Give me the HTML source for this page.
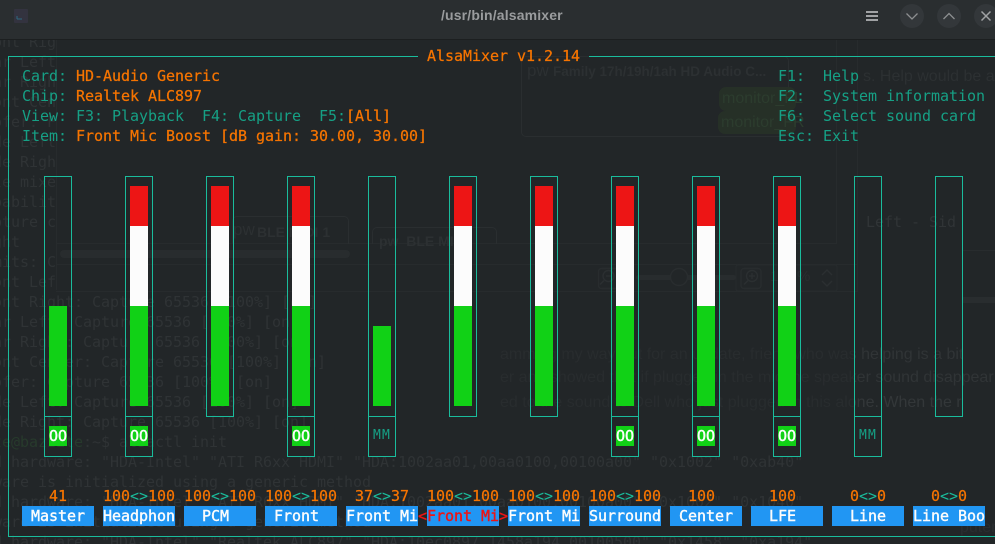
<!DOCTYPE html>
<html><head><meta charset="utf-8"><title>alsamixer</title>
<style>
html,body{margin:0;padding:0;background:#222628;width:995px;height:544px;overflow:hidden}
#r{position:relative;width:995px;height:544px;overflow:hidden;background:#222628}
.a{position:absolute}
.t{position:absolute;white-space:pre;font:15px/20px "DejaVu Sans Mono","Liberation Mono",monospace;letter-spacing:-.03px}
.o{color:#f67400;-webkit-text-stroke:.25px #f67400}.g{color:#16a085}.w{color:#fcfcfc;-webkit-text-stroke:.4px #fcfcfc}.rd{color:#ed1515;-webkit-text-stroke:.4px #ed1515}
.c{color:#1abc9c;-webkit-text-stroke:0}
.bg{color:#2f3335;left:-7px}
.s{position:absolute;white-space:pre;font:15px/20px "Liberation Sans",sans-serif;color:#2a2e30}
.f{position:absolute;width:26px;border:1px solid #1abc9c;box-sizing:content-box;top:176px;height:239px}
.f2{height:279px}
.f2:after{content:"";position:absolute;left:0;right:0;top:239px;height:1px;background:#1abc9c}
.l{position:absolute;background:#1abc9c}
.b{position:absolute;width:18px}
.lab{position:absolute;top:506px;height:20px;width:72px;background:#2196f3}
.btn{position:absolute;top:4px;width:24px;height:24px;border-radius:50%;background:#33373a}
</style></head><body><div id="r">

<!-- faint background windows -->
<div class="a" style="left:56px;top:40px;width:1px;height:250px;background:#272b2d"></div>
<div class="a" style="left:56px;top:243px;width:780px;height:1px;background:#272b2d"></div>
<div class="a" style="left:56px;top:264px;width:801px;height:1px;background:#272b2d"></div>
<div class="a" style="left:56px;top:291px;width:801px;height:1px;background:#272b2d"></div>
<div class="a" style="left:836px;top:40px;width:1px;height:204px;background:#272b2d"></div>
<div class="a" style="left:857px;top:40px;width:1px;height:252px;background:#272b2d"></div>
<div class="a" style="left:60px;top:250px;width:290px;height:8px;border-radius:4px;background:#282c2e"></div>
<div class="a" style="left:521px;top:56px;width:268px;height:81px;border:1px solid #2a2e30;border-radius:5px;box-sizing:border-box"></div>
<div class="a" style="left:719px;top:87px;width:77px;height:24px;background:#263027;border-radius:7px"></div>
<div class="a" style="left:718px;top:111px;width:78px;height:23px;background:#263027;border-radius:7px"></div>
<div class="a" style="left:232px;top:216px;width:117px;height:28px;border:1px solid #2a2e30;border-bottom:0;border-radius:5px 5px 0 0;box-sizing:border-box"></div>
<div class="a" style="left:372px;top:227px;width:125px;height:17px;border:1px solid #2a2e30;border-bottom:0;border-radius:5px 5px 0 0;box-sizing:border-box"></div>
<div class="a" style="left:636px;top:275px;width:100px;height:5px;background:#282c2e;border-radius:3px"></div>
<svg class="a" style="left:596px;top:264px" width="250" height="28" fill="none" stroke="#2b2f31" stroke-width="1.400">
<rect x="2.500" y="4.500" width="20" height="20" rx="3" stroke="#282c2e"/>
<circle cx="12.500" cy="12" r="5.500"/><path d="M8 16.500l-4 4M10 12h5"/>
<circle cx="83" cy="13" r="8.500" fill="#222628" stroke="#292d2f"/>
<rect x="145" y="4.500" width="20" height="20" rx="3" stroke="#282c2e"/>
<circle cx="156" cy="12" r="5.500"/><path d="M152 16.500l-4 4M153 12h6M156 9v6"/>
<path d="M226 11l5-5 5 5M226 17l5 5 5-5"/>
<rect x="140" y="1" width="101" height="26" rx="2" stroke="#272b2d" stroke-width="1"/>
</svg>
<div class="s" style="left:770px;top:267px;color:#2a2e30">1</div>
<div class="s" style="left:797px;top:267px;color:#2a2e30">%</div>
<div class="a" style="left:963px;top:297px;width:32px;height:6px;background:#292d2f"></div>
<div class="a" style="left:963px;top:250px;width:32px;height:1px;background:#282c2e"></div>
<div class="s" style="left:527px;top:61px;font-size:17px;color:#2c3032">pw</div>
<div class="s" style="left:553px;top:62px;font-weight:bold;font-size:13.500px;color:#2c3032">Family 17h/19h/1ah HD Audio C...</div>
<div class="s" style="left:722px;top:89px;font-size:16px;color:#2c3c2e">monitor_FL</div>
<div class="s" style="left:721px;top:113px;font-size:16px;color:#2c3c2e">monitor_FR</div>
<div class="s" style="left:233px;top:220px;font-size:17px;color:#2c3032">pw</div>
<div class="s" style="left:257px;top:222px;font-weight:bold;font-size:14px;color:#2c3032">BLE MIDI 1</div>
<div class="s" style="left:379px;top:231px;font-weight:bold;font-size:14px;color:#2c3032">pw  BLE MIDI</div>
<div class="s" style="left:863px;top:67px;font-size:16px;color:#2c3032">s. Help would be ap</div>
<div class="s" style="left:500px;top:345px;font-size:16px;background:linear-gradient(90deg,#282c2e 0 355px,#303436 355px);-webkit-background-clip:text;background-clip:text;color:transparent">amming my way out for an update, friend who was helping is a bit</div>
<div class="s" style="left:500px;top:368px;font-size:16px;background:linear-gradient(90deg,#282c2e 0 355px,#303436 355px);-webkit-background-clip:text;background-clip:text;color:transparent">er and showed that if plugged in the mic the speaker sound disappear a</div>
<div class="s" style="left:500px;top:393px;font-size:16px;background:linear-gradient(90deg,#282c2e 0 355px,#333739 355px);-webkit-background-clip:text;background-clip:text;color:transparent">ed to the sound to Dell who just plugged in this alone. When the r</div>
<div class="s" style="left:960px;top:518px;font-size:16px">puter</div>
<div class="t" style="left:866px;top:212px;color:#303436">Left - Sid</div>

<!-- faint terminal scrollback -->
<div class="t bg" style="top:32px">ont Rig</div>
<div class="t bg" style="top:52px">ar Left</div>
<div class="t bg" style="top:72px">ar Righ</div>
<div class="t bg" style="top:92px">ont Cen</div>
<div class="t bg" style="top:112px">ofer: F</div>
<div class="t bg" style="top:132px">de Left</div>
<div class="t bg" style="top:152px">de Righ</div>
<div class="t bg" style="top:172px">le mixe</div>
<div class="t bg" style="top:192px">pabilit</div>
<div class="t bg" style="top:212px">pture c</div>
<div class="t bg" style="top:232px">ght</div>
<div class="t bg" style="top:252px">mits: C</div>
<div class="t bg" style="top:272px">ont Lef</div>
<div class="t bg" style="top:292px">ont Right: Capture 65536 [100%] [on]</div>
<div class="t bg" style="top:312px">ar Left: Capture 65536 [100%] [on]</div>
<div class="t bg" style="top:332px">ar Right: Capture 65536 [100%] [on]</div>
<div class="t bg" style="top:352px">ont Center: Capture 65536 [100%] [on]</div>
<div class="t bg" style="top:372px">ofer: Capture 65536 [100%] [on]</div>
<div class="t bg" style="top:392px">de Left: Capture 65536 [100%] [on]</div>
<div class="t bg" style="top:412px">de Right: Capture 65536 [100%] [on]</div>
<div class="t bg" style="top:432px"><span style="color:#273a2c">te@bazzite</span>:~$ alsactl init</div>
<div class="t bg" style="top:452px">d hardware: "HDA-Intel" "ATI R6xx HDMI" "HDA:1002aa01,00aa0100,00100a00" "0x1002" "0xab40"</div>
<div class="t bg" style="top:472px">ware is initialized using a generic method</div>
<div class="t bg" style="top:492px">d hardware: "HDA-Intel" "ATI R6xx HDMI" "HDA:1002aa01,00aa0100,00100a00" "0x1002" "0x1040"</div>
<div class="t bg" style="top:512px">ware is initialized using a generic method</div>
<div class="t bg" style="top:532px">d hardware: "HDA-Intel" "Realtek ALC897" "HDA:10ec0897,1458a194,00100500" "0x1458" "0xa194"</div>

<!-- title bar -->
<div class="a" style="left:0;top:0;width:995px;height:39px;background:#2a2e30;border-bottom:1px solid #1c1f20"></div>
<svg class="a" style="left:14px;top:9px" width="14" height="14" viewBox="0 0 14 14"><rect width="14" height="14" rx="1" fill="#33333f"/><path d="M3 7v3M3 10h5" stroke="#2d6a80" fill="none"/></svg>
<div class="a" style="left:441px;top:4px;white-space:pre;font:bold 14px/22px 'Liberation Sans',sans-serif;color:#9a9c9e;letter-spacing:.15px">/usr/bin/alsamixer</div>
<svg class="a" style="left:866px;top:11px" width="12" height="10"><rect width="12" height="2" fill="#a0a2a4"/><rect y="4" width="12" height="2" fill="#a0a2a4"/><rect y="8" width="12" height="2" fill="#a0a2a4"/></svg>
<div class="btn" style="left:900px"><svg width="24" height="24"><path d="M6.500 9.500l5.500 5.500 5.500-5.500" stroke="#8d8f91" stroke-width="1.300" fill="none"/></svg></div>
<div class="btn" style="left:937px"><svg width="24" height="24"><path d="M6.500 15l5.500-5.500 5.500 5.500" stroke="#8d8f91" stroke-width="1.300" fill="none"/></svg></div>
<div class="btn" style="left:974px"><svg width="24" height="24"><path d="M7.500 7.500l9 9M16.500 7.500l-9 9" stroke="#a0a2a4" stroke-width="1.500" fill="none"/></svg></div>

<!-- outer border -->
<div class="l" style="left:8px;top:56px;width:410px;height:1px"></div>
<div class="l" style="left:589px;top:56px;width:406px;height:1px"></div>
<div class="l" style="left:8px;top:56px;width:1px;height:481px"></div>
<div class="l" style="left:8px;top:536px;width:987px;height:1px"></div>

<!-- header text -->
<div class="t o" style="left:427px;top:46px">AlsaMixer v1.2.14</div>
<div class="t" style="left:22px;top:66px"><span class="g">Card: </span><span class="o">HD-Audio Generic</span></div>
<div class="t" style="left:22px;top:86px"><span class="g">Chip: </span><span class="o">Realtek ALC897</span></div>
<div class="t" style="left:22px;top:106px"><span class="g">View: F3: Playback  F4: Capture  F5:</span><span class="o">[All]</span></div>
<div class="t" style="left:22px;top:126px"><span class="g">Item: </span><span class="o">Front Mic Boost [dB gain: 30.00, 30.00]</span></div>
<div class="t g" style="left:778px;top:66px">F1:  Help</div>
<div class="t g" style="left:778px;top:86px">F2:  System information</div>
<div class="t g" style="left:778px;top:106px">F6:  Select sound card</div>
<div class="t g" style="left:778px;top:126px">Esc: Exit</div>

<!-- frames -->
<div class="f f2" style="left:44px"></div>
<div class="f f2" style="left:125px"></div>
<div class="f" style="left:206px"></div>
<div class="f f2" style="left:287px"></div>
<div class="f f2" style="left:368px"></div>
<div class="f" style="left:449px"></div>
<div class="f" style="left:530px"></div>
<div class="f f2" style="left:611px"></div>
<div class="f f2" style="left:692px"></div>
<div class="f f2" style="left:773px"></div>
<div class="f f2" style="left:854px"></div>
<div class="f" style="left:935px"></div>

<!-- bars -->
<div class="b" style="left:49px;top:306px;height:100px;background:#11d116"></div>

<div class="b" style="left:130px;top:186px;height:40px;background:#ed1515"></div><div class="b" style="left:130px;top:226px;height:80px;background:#fcfcfc"></div><div class="b" style="left:130px;top:306px;height:100px;background:#11d116"></div>
<div class="b" style="left:211px;top:186px;height:40px;background:#ed1515"></div><div class="b" style="left:211px;top:226px;height:80px;background:#fcfcfc"></div><div class="b" style="left:211px;top:306px;height:100px;background:#11d116"></div>
<div class="b" style="left:292px;top:186px;height:40px;background:#ed1515"></div><div class="b" style="left:292px;top:226px;height:80px;background:#fcfcfc"></div><div class="b" style="left:292px;top:306px;height:100px;background:#11d116"></div>

<div class="b" style="left:373px;top:326px;height:80px;background:#11d116"></div>

<div class="b" style="left:454px;top:186px;height:40px;background:#ed1515"></div><div class="b" style="left:454px;top:226px;height:80px;background:#fcfcfc"></div><div class="b" style="left:454px;top:306px;height:100px;background:#11d116"></div>
<div class="b" style="left:535px;top:186px;height:40px;background:#ed1515"></div><div class="b" style="left:535px;top:226px;height:80px;background:#fcfcfc"></div><div class="b" style="left:535px;top:306px;height:100px;background:#11d116"></div>
<div class="b" style="left:616px;top:186px;height:40px;background:#ed1515"></div><div class="b" style="left:616px;top:226px;height:80px;background:#fcfcfc"></div><div class="b" style="left:616px;top:306px;height:100px;background:#11d116"></div>
<div class="b" style="left:697px;top:186px;height:40px;background:#ed1515"></div><div class="b" style="left:697px;top:226px;height:80px;background:#fcfcfc"></div><div class="b" style="left:697px;top:306px;height:100px;background:#11d116"></div>
<div class="b" style="left:778px;top:186px;height:40px;background:#ed1515"></div><div class="b" style="left:778px;top:226px;height:80px;background:#fcfcfc"></div><div class="b" style="left:778px;top:306px;height:100px;background:#11d116"></div>

<!-- switches -->
<div class="b" style="left:49px;top:426px;height:20px;background:#11d116"></div><div class="t w" style="left:49px;top:426px">OO</div>
<div class="b" style="left:130px;top:426px;height:20px;background:#11d116"></div><div class="t w" style="left:130px;top:426px">OO</div>
<div class="b" style="left:292px;top:426px;height:20px;background:#11d116"></div><div class="t w" style="left:292px;top:426px">OO</div>
<div class="t g" style="left:373px;top:426px;font-size:13px;letter-spacing:1.200px">MM</div>
<div class="b" style="left:616px;top:426px;height:20px;background:#11d116"></div><div class="t w" style="left:616px;top:426px">OO</div>
<div class="b" style="left:697px;top:426px;height:20px;background:#11d116"></div><div class="t w" style="left:697px;top:426px">OO</div>
<div class="b" style="left:778px;top:426px;height:20px;background:#11d116"></div><div class="t w" style="left:778px;top:426px">OO</div>
<div class="t g" style="left:859px;top:426px;font-size:13px;letter-spacing:1.200px">MM</div>

<!-- values -->
<div class="t o" style="left:49px;top:486px">41</div>
<div class="t o" style="left:103px;top:486px">100<span class="c">&lt;&gt;</span>100</div>
<div class="t o" style="left:184px;top:486px">100<span class="c">&lt;&gt;</span>100</div>
<div class="t o" style="left:265px;top:486px">100<span class="c">&lt;&gt;</span>100</div>
<div class="t o" style="left:355px;top:486px">37<span class="c">&lt;&gt;</span>37</div>
<div class="t o" style="left:427px;top:486px">100<span class="c">&lt;&gt;</span>100</div>
<div class="t o" style="left:508px;top:486px">100<span class="c">&lt;&gt;</span>100</div>
<div class="t o" style="left:589px;top:486px">100<span class="c">&lt;&gt;</span>100</div>
<div class="t o" style="left:688px;top:486px">100</div>
<div class="t o" style="left:769px;top:486px">100</div>
<div class="t o" style="left:850px;top:486px">0<span class="c">&lt;&gt;</span>0</div>
<div class="t o" style="left:931px;top:486px">0<span class="c">&lt;&gt;</span>0</div>

<!-- labels -->
<div class="lab" style="left:22px"></div><div class="t w" style="left:31px;top:506px">Master</div>
<div class="lab" style="left:103px"></div><div class="t w" style="left:103px;top:506px">Headphon</div>
<div class="lab" style="left:184px"></div><div class="t w" style="left:202px;top:506px">PCM</div>
<div class="lab" style="left:265px"></div><div class="t w" style="left:274px;top:506px">Front</div>
<div class="lab" style="left:346px"></div><div class="t w" style="left:346px;top:506px">Front Mi</div>
<div class="lab" style="left:427px"></div><div class="t rd" style="left:418px;top:506px">&lt;Front Mi&gt;</div>
<div class="lab" style="left:508px"></div><div class="t w" style="left:508px;top:506px">Front Mi</div>
<div class="lab" style="left:589px"></div><div class="t w" style="left:589px;top:506px">Surround</div>
<div class="lab" style="left:670px"></div><div class="t w" style="left:679px;top:506px">Center</div>
<div class="lab" style="left:751px"></div><div class="t w" style="left:769px;top:506px">LFE</div>
<div class="lab" style="left:832px"></div><div class="t w" style="left:850px;top:506px">Line</div>
<div class="lab" style="left:913px"></div><div class="t w" style="left:913px;top:506px">Line Boo</div>

</div></body></html>
